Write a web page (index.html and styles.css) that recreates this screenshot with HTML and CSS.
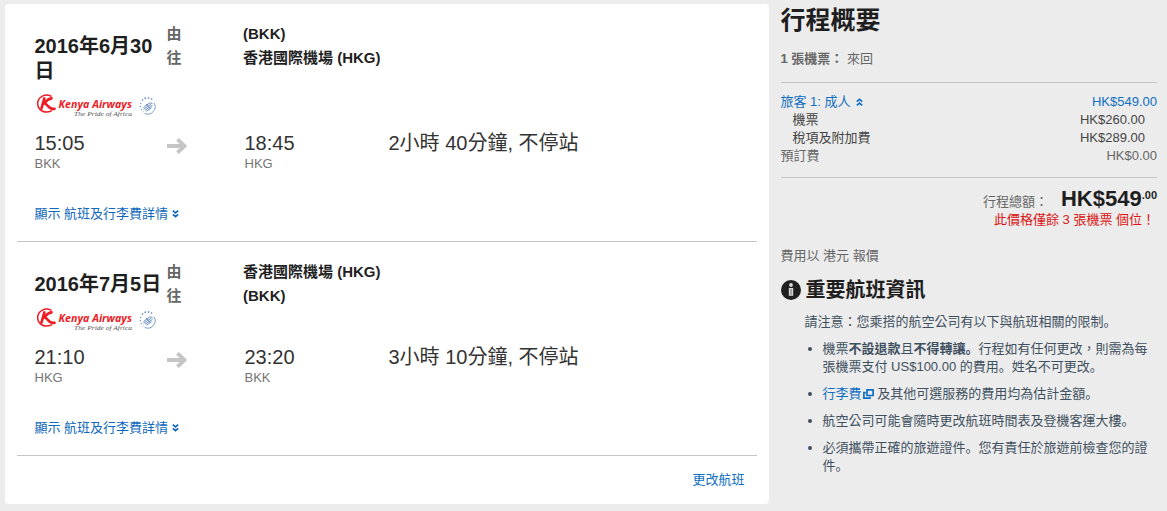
FILE: index.html
```html
<!DOCTYPE html>
<html lang="zh-Hant">
<head>
<meta charset="utf-8">
<title>行程概要</title>
<link rel="stylesheet" href="styles.css">
</head>
<body>
<svg class="defs" width="0" height="0" aria-hidden="true">
  <symbol id="emblem" viewBox="0 0 122 25">
    <g fill="none" stroke="#ee1c25" stroke-linecap="round">
      <path d="M16 2.200C10.500 -.6 2.900 2.500 2.700 9.300C2.500 16.500 10 20 16.500 16.900" stroke-width="1.500"/>
      <path d="M9.300 4.500L6.500 14.500" stroke-width="2.700"/>
      <path d="M16.500 4.300C13 4.800 11 7 9.300 9.300C12.500 9 13 16 19.500 14.800" stroke-width="2.700"/>
    </g>
    <g fill="none" stroke="#6a8fc0">
      <path d="M107 6.500a7.300 7.300 0 0 1 10.500-.7" stroke-width="1.500" stroke-dasharray="1.500 1.700"/>
      <path d="M106 9a7.300 7.300 0 0 0 2.500 9" stroke-width="1.100" stroke-dasharray="1.200 1.900"/>
      <path d="M119.200 9a7.500 7.500 0 0 1-9.500 10.500" stroke-width=".9"/>
      <path d="M108.500 13.500l6-4.500 3 .3M108.500 15.300l7.500-5M110 16.300l7.500-5M111.500 17.300l5-3.800M111 10l4.500 5" stroke-width="1"/>
    </g>
  </symbol>
  <symbol id="arrow" viewBox="0 0 20 16">
    <path d="M0 8h17M10.500 1.300L17.500 8l-7 6.700" fill="none" stroke="#c5c5c5" stroke-width="3.800"/>
  </symbol>
  <symbol id="chevrons" viewBox="0 0 7 8">
    <path d="M.8.700l2.700 2.200L6.200.700M.8 4.400l2.700 2.300 2.700-2.300" fill="none" stroke="currentColor" stroke-width="1.700"/>
  </symbol>
</svg>

<div class="page">
  <main class="card">
    <section class="leg leg-first">
      <div class="leg-head">
        <div class="leg-title">
          <h2 class="date">2016年6月30日</h2>
          <svg class="logo" viewBox="0 0 122 25">
            <use href="#emblem"/>
            <text class="logo-name" x="23.500" y="13.600" textLength="73.500" lengthAdjust="spacingAndGlyphs">Kenya Airways</text>
            <text class="logo-tag" x="39" y="21.500" textLength="58" lengthAdjust="spacingAndGlyphs">The Pride of Africa</text>
          </svg>
        </div>
        <dl class="route">
          <dt>由</dt><dd>(BKK)</dd>
          <dt>往</dt><dd>香港國際機場 (HKG)</dd>
        </dl>
      </div>
      <div class="times">
        <div><div class="time">15:05</div><div class="code">BKK</div></div>
        <svg class="arrow"><use href="#arrow"/></svg>
        <div><div class="time">18:45</div><div class="code">HKG</div></div>
        <div class="time">2小時 40分鐘, 不停站</div>
      </div>
      <a class="details">顯示 航班及行李費詳情<svg class="chev"><use href="#chevrons"/></svg></a>
    </section>
    <section class="leg">
      <div class="leg-head">
        <div class="leg-title">
          <h2 class="date">2016年7月5日</h2>
          <svg class="logo" viewBox="0 0 122 25">
            <use href="#emblem"/>
            <text class="logo-name" x="23.500" y="13.600" textLength="73.500" lengthAdjust="spacingAndGlyphs">Kenya Airways</text>
            <text class="logo-tag" x="39" y="21.500" textLength="58" lengthAdjust="spacingAndGlyphs">The Pride of Africa</text>
          </svg>
        </div>
        <dl class="route">
          <dt>由</dt><dd>香港國際機場 (HKG)</dd>
          <dt>往</dt><dd>(BKK)</dd>
        </dl>
      </div>
      <div class="times">
        <div><div class="time">21:10</div><div class="code">HKG</div></div>
        <svg class="arrow"><use href="#arrow"/></svg>
        <div><div class="time">23:20</div><div class="code">BKK</div></div>
        <div class="time">3小時 10分鐘, 不停站</div>
      </div>
      <a class="details">顯示 航班及行李費詳情<svg class="chev"><use href="#chevrons"/></svg></a>
    </section>
    <a class="change">更改航班</a>
  </main>

  <aside class="side">
    <h1 class="side-title">行程概要</h1>
    <p class="tickets"><b>1 張機票：</b> 來回</p>
    <div class="fares">
      <div class="row link"><span>旅客 1: 成人<svg class="chev up"><use href="#chevrons"/></svg></span><span>HK$549.00</span></div>
      <div class="row sub"><span>機票</span><span>HK$260.00</span></div>
      <div class="row sub"><span>稅項及附加費</span><span>HK$289.00</span></div>
      <div class="row"><span>預訂費</span><span>HK$0.00</span></div>
    </div>
    <div class="total"><span>行程總額：</span><strong class="price">HK$549<span class="cents">.00</span></strong></div>
    <p class="warning">此價格僅餘 3 張機票 個位！</p>
    <p class="currency">費用以 港元 報價</p>
    <h2 class="info-title">
      <svg class="info" viewBox="0 0 20 20"><circle cx="10" cy="10" r="10" fill="#1f1f1f"/><path d="M7.800 8h4.400v7.800H7.800z" fill="#d8d8d8"/><path d="M10 9v6" stroke="#777" stroke-width="1"/><circle cx="10" cy="5" r="1.900" fill="#d8d8d8"/></svg>
      重要航班資訊
    </h2>
    <div class="notes">
      <p>請注意：您乘搭的航空公司有以下與航班相關的限制<span class="stop" lang="zh-Hans">。</span></p>
      <ul>
        <li>機票<b>不設退款</b>且<b>不得轉讓<span class="stop" lang="zh-Hans">。</span></b>行程如有任何更改，則需為每張機票支付 US$100.00 的費用<span class="stop" lang="zh-Hans">。</span>姓名不可更改<span class="stop" lang="zh-Hans">。</span></li>
        <li><a class="link">行李費<svg class="popup" viewBox="0 0 11 10"><path d="M4 .9h6.100v5.600H4zM2.800 3.600H.9v5.500h6V7.800" fill="none" stroke="currentColor" stroke-width="1.700"/></svg></a> 及其他可選服務的費用均為估計金額<span class="stop" lang="zh-Hans">。</span></li>
        <li>航空公司可能會隨時更改航班時間表及登機客運大樓<span class="stop" lang="zh-Hans">。</span></li>
        <li>必須攜帶正確的旅遊證件<span class="stop" lang="zh-Hans">。</span>您有責任於旅遊前檢查您的證件<span class="stop" lang="zh-Hans">。</span></li>
      </ul>
    </div>
  </aside>
</div>
</body>
</html>
```

FILE: styles.css
```css
* { box-sizing: border-box; }

body {
  margin: 0;
  background: #ececec;
  color: #666;
  font: 13px/18px "Liberation Sans", "Noto Sans CJK TC", sans-serif;
}

h1, h2, p, dl, dd, ul { margin: 0; padding: 0; }
.defs { display: block; }
svg { flex: none; }

.page {
  display: flex;
  gap: 11.5px;
  height: 511px;
  padding: 4px 10px 0 5px;
  overflow: hidden;
}

/* Flight card */
.card {
  width: 764px;
  height: 500px;
  padding: 0 12px;
  background: #fff;
  border-radius: 4px;
}

.leg {
  height: 214px;
  padding: 18px 0 0 17.5px;
  border-bottom: 1px solid #c5c5c5;
}
.leg-first { height: 238px; }

.leg-head { display: flex; }
.leg-title { width: 132px; padding-top: 12px; }
.date {
  width: 128px;
  color: #1f1f1f;
  font-size: 20px;
  line-height: 24.5px;
}
.logo {
  display: block;
  width: 122px;
  height: 25px;
  margin: 11px 0 12px 0.5px;
}
.logo-name { font: italic 700 11px "Open Sans", sans-serif; fill: #ee1c25; }
.logo-tag { font: italic 7px "Liberation Serif", serif; fill: #555; }

.route {
  display: grid;
  grid-template-columns: 76.5px auto;
  grid-auto-rows: 24px;
  align-content: start;
  font-size: 15px;
  font-weight: bold;
  line-height: 24px;
}
.route dd { color: #1f1f1f; }

.times {
  display: grid;
  grid-template-columns: 132px 78px 144px auto;
  height: 41px;
}
.time { color: #333; font-size: 20px; line-height: 24px; }
.code { line-height: 17px; color: #757575; }
.arrow { width: 20px; height: 16px; margin-top: 7px; }

.details {
  display: block;
  margin-top: 33px;
  color: #0f68bb;
}
.chev { width: 7px; height: 8px; margin-left: 4px; vertical-align: 0; }
.up { transform: rotate(180deg); margin-left: 5px; }
.change {
  display: block;
  margin-top: 15px;
  padding-right: 12.5px;
  text-align: right;
  color: #0f6fc2;
}

/* Trip summary */
.side { width: 376.5px; }
.side-title {
  color: #1f1f1f;
  font-size: 25px;
  line-height: 32px;
}
.tickets { margin-top: 14px; }
.fares {
  margin-top: 14px;
  padding: 10px 0 12px;
  border: solid #c5c5c5;
  border-width: 1px 0;
}
.row { display: flex; justify-content: space-between; }
.sub { padding: 0 12px; color: #444; }
.link, .row.link { color: #0f6fc2; }

.total {
  display: flex;
  justify-content: flex-end;
  align-items: baseline;
  gap: 13px;
  height: 32px;
  line-height: 32px;
  margin-top: 5px;
}
.price { color: #1f1f1f; font-size: 22px; }
.cents { font-size: 11px; line-height: 0; vertical-align: 7px; }
.warning { margin-top: -4px; padding-right: 2px; text-align: right; color: #dc1414; }
.currency { margin-top: 18px; }

.info-title {
  display: flex;
  align-items: center;
  gap: 5px;
  margin-top: 12px;
  color: #1f1f1f;
  font-size: 20px;
  line-height: 26px;
}
.info { width: 20px; height: 20px; }

.notes { padding: 10px 0 0 24px; color: #3f5060; }
.notes ul { padding-left: 18px; }
.notes li { margin-top: 9px; }
.popup { width: 11px; height: 10px; margin-left: 1px; vertical-align: -1px; }

/* Full stop sits at the lower left of its cell */
.stop { font-family: "Liberation Sans", "Noto Sans CJK SC", sans-serif; }
```
